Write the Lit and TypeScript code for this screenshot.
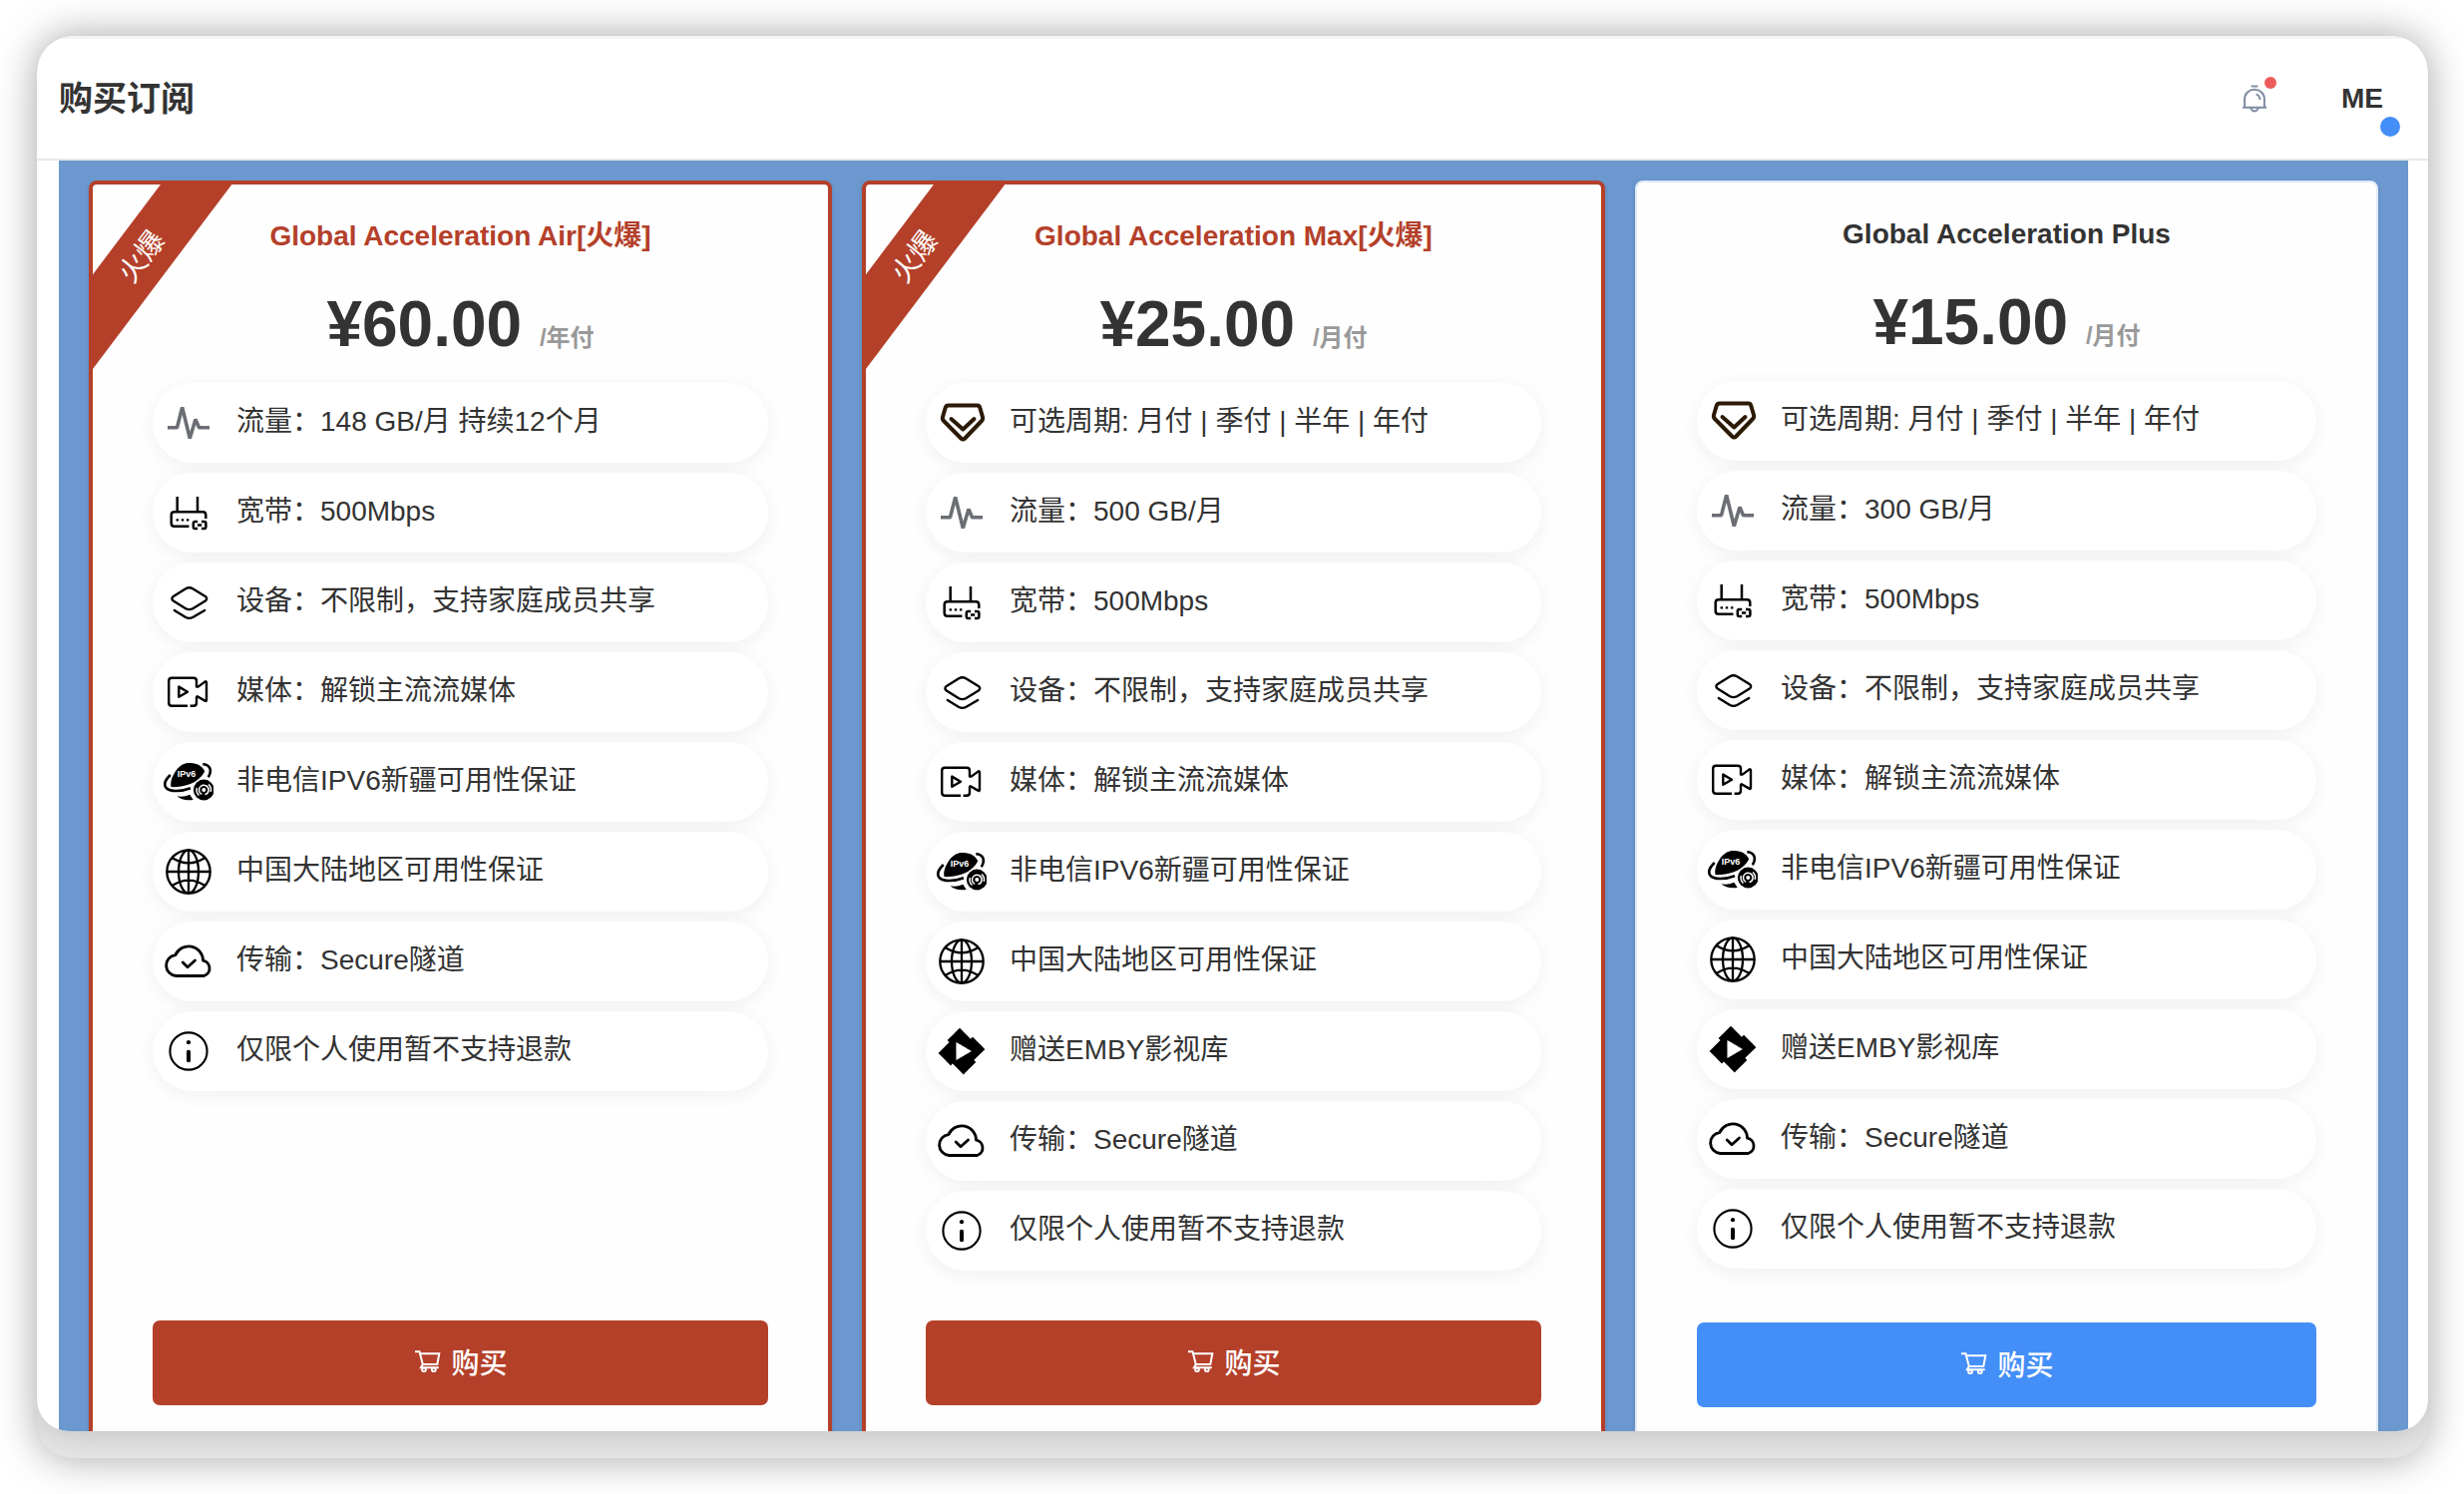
import { LitElement, html, css, svg, type TemplateResult } from "lit";
import { customElement, property } from "lit/decorators.js";
import { classMap } from "lit/directives/class-map.js";

type IconName =
  | "shield" | "pulse" | "router" | "layers" | "video"
  | "ipv6" | "globe" | "emby" | "cloud" | "info";

interface Feature {
  icon: IconName;
  text: string;
}

interface Plan {
  name: string;
  price: string;
  period: string;
  ribbon?: string;
  features: Feature[];
}

const icons: Record<IconName, TemplateResult> = {
  shield: svg`<g fill="none" stroke="#2b1a06" stroke-width="4" stroke-linejoin="round" stroke-linecap="round">
    <path d="M12 7.500H40.600Q42.600 7.500 43.200 9.500L46 19Q46.600 21.400 45 23L28.300 40.500Q26.300 42.500 24.300 40.500L7 23Q5.400 21.400 6 19L8.800 9.500Q9.400 7.500 12 7.500Z"/>
    <path d="M14.500 21L26.300 31.500L37.500 21"/></g>`,
  pulse: svg`<path fill="none" stroke="#6b6e74" stroke-width="3.600" stroke-linejoin="bevel" d="M4 29.700H13.500L18.700 9.500L26.300 40.500L32 21.500L35.500 29.700H46"/>`,
  router: svg`<g fill="none" stroke="#000" stroke-width="2.500">
    <path d="M13.700 9V24M34 9V24"/>
    <path d="M42.300 31V27.300Q42.300 24.300 39.300 24.300H10.700Q7.700 24.300 7.700 27.300V35.700Q7.700 38.700 10.700 38.700H25.500"/>
    <path d="M34.200 34H31.600Q29.800 34 29.800 35.800V39.200Q29.800 41 31.600 41H34.200M38 34H40.600Q42.400 34 42.400 35.800V39.200Q42.400 41 40.600 41H38M34 37.500H38.200"/></g>
    <path d="M12.600 31.200h2.400v2.400h-2.400zM17.800 31.200h2.400v2.400h-2.400zM23 31.200h2.400v2.400h-2.400z"/>`,
  layers: svg`<g fill="none" stroke="#000" stroke-width="2.400" stroke-linejoin="round" stroke-linecap="round">
    <path d="M22.200 11.200Q25.700 9.400 29.200 11.200L41.800 18.900Q44.600 21.200 41.800 23.500L29.200 31.200Q25.700 33 22.200 31.200L9.800 23.500Q7 21.200 9.800 18.900Z"/>
    <path d="M10.800 33L22.200 40Q25.700 41.800 29.200 40L41.200 33"/></g>`,
  video: svg`<g fill="none" stroke="#000" stroke-width="2.400" stroke-linejoin="round">
    <path d="M24 38.700H8.200Q5.200 38.700 5.200 35.700V13.800Q5.200 10.800 8.200 10.800H30Q33 10.800 33 13.800V19.600H34.600L41.400 14.600Q43 13.700 43 15.600V32.800Q43 34.600 41.400 33.600L33.800 29.200L33 30V35.700Q33 38.700 30 38.700H26.600"/>
    <path d="M15.300 19.600V29.800L24 24.700Z"/></g>`,
  ipv6: svg`<path d="M7.500 30C6.400 24.500 9 18.500 12.500 13.500C17 7.500 21.500 5.800 27 6C33.500 6.200 39 9 41.200 14.300C38.600 20.300 31.500 26.500 22 28.600C16.500 29.900 11 30.400 7.500 30Z"/>
    <path fill="none" stroke="#000" stroke-width="2.600" d="M6.800 18C2 22.500 -.2 27.500 2.600 31C6.500 35 17 35 27 31.200M39.300 7.200C45.500 7.300 49.500 12.500 44.800 20.200"/>
    <path d="M13.500 39.300Q20 40.500 26.300 37.800L29.700 43Q19.500 44.600 13.500 39.300Z"/>
    <circle cx="40.300" cy="33" r="10.400"/>
    <path fill="none" stroke="#fff" stroke-width="1.500" d="M38.200 37.400A4.800 4.800 0 1 1 45 32.200M42.400 28.600A4.800 4.800 0 0 1 41.500 37.600M33.400 31A7.300 7.300 0 0 0 35.500 38.500M47.200 35A7.300 7.300 0 0 0 45 27.500"/>
    <circle cx="40.300" cy="33" r="2" fill="#fff"/>
    <text class="tiny" x="13.800" y="20" fill="#fff">IPv6</text>`,
  globe: svg`<g fill="none" stroke="#000" stroke-width="2.300">
    <circle cx="25" cy="25" r="21.700"/><ellipse cx="25" cy="25" rx="10" ry="21.700"/>
    <path d="M25 3.300V46.700M3.300 25H46.700M8.500 11Q25 21.800 41.500 11M8.500 39Q25 28.200 41.500 39"/></g>`,
  emby: svg`<path transform="translate(1.600 1.700) scale(1.945)" d="M11.041 0c-.007 0-1.456 1.430-3.219 3.176L4.615 6.352l.512.513.512.512-2.819 2.791L0 12.961l1.830 1.848c1.006 1.016 2.438 2.460 3.182 3.209l1.351 1.359.508-.496c.280-.273.515-.498.524-.498.008 0 1.266 1.264 2.794 2.808L12.970 24l.187-.182c.230-.225 5.007-4.950 5.717-5.656l.520-.516-.502-.513c-.276-.282-.500-.520-.496-.530.003-.009 1.264-1.260 2.802-2.783 1.538-1.522 2.800-2.776 2.803-2.785.005-.012-3.617-3.684-6.107-6.193L17.650 4.600l-.505.505c-.279.278-.517.501-.530.497-.013-.005-1.270-1.267-2.793-2.805A449.655 449.655 0 0 0 11.041 0zM9.223 7.367c.091.038 7.951 4.608 7.957 4.627.003.013-1.781 1.056-3.965 2.320a999.898 999.898 0 0 1-3.996 2.307c-.019.006-.026-1.266-.026-4.629 0-3.700.007-4.634.030-4.625Z"/>`,
  cloud: svg`<g fill="none" stroke="#000" stroke-width="2.800" stroke-linejoin="round" stroke-linecap="round">
    <path d="M12.500 39.500A10.500 10.500 0 0 1 11.800 18.600A14.500 14.500 0 0 1 39.600 24.200A7.900 7.900 0 0 1 40.500 39.500Z"/>
    <path d="M19.200 26L24 30.800L31.500 24"/></g>`,
  info: svg`<circle cx="25" cy="25" r="18.600" fill="none" stroke="#000" stroke-width="2.100"/>
    <circle cx="25" cy="16.200" r="2.100"/><rect x="23" y="23.700" width="4" height="12.600" rx="1.800"/>`,
};

const period: Feature = { icon: "shield", text: "可选周期: 月付 | 季付 | 半年 | 年付" };
const traffic = (text: string): Feature => ({ icon: "pulse", text: `流量：${text}` });
const common: Feature[] = [
  { icon: "router", text: "宽带：500Mbps" },
  { icon: "layers", text: "设备：不限制，支持家庭成员共享" },
  { icon: "video", text: "媒体：解锁主流流媒体" },
  { icon: "ipv6", text: "非电信IPV6新疆可用性保证" },
  { icon: "globe", text: "中国大陆地区可用性保证" },
];
const emby: Feature = { icon: "emby", text: "赠送EMBY影视库" };
const closing: Feature[] = [
  { icon: "cloud", text: "传输：Secure隧道" },
  { icon: "info", text: "仅限个人使用暂不支持退款" },
];

const plans: Plan[] = [
  {
    name: "Global Acceleration Air[火爆]",
    price: "¥60.00",
    period: "/年付",
    ribbon: "火爆",
    features: [traffic("148 GB/月 持续12个月"), ...common, ...closing],
  },
  {
    name: "Global Acceleration Max[火爆]",
    price: "¥25.00",
    period: "/月付",
    ribbon: "火爆",
    features: [period, traffic("500 GB/月"), ...common, emby, ...closing],
  },
  {
    name: "Global Acceleration Plus",
    price: "¥15.00",
    period: "/月付",
    features: [period, traffic("300 GB/月"), ...common, emby, ...closing],
  },
];

@customElement("plan-card")
export class PlanCard extends LitElement {
  @property({ attribute: false }) plan!: Plan;

  static styles = css`
    :host {
      display: flex;
      min-width: 0;
    }
    .card {
      position: relative;
      flex: 1;
      min-width: 0;
      box-sizing: border-box;
      display: flex;
      flex-direction: column;
      padding: 28px 60px 60px;
      overflow: hidden;
      background: #fefefe;
      border: 2px solid #dfeaf7;
      border-radius: 8px;
      box-shadow: 0 2px 4px rgba(40, 60, 100, 0.2);
    }
    .card.hot {
      border: 4px solid #b4402a;
    }
    .ribbon {
      position: absolute;
      left: -91px;
      top: 44px;
      width: 280px;
      line-height: 57px;
      background: #b4402a;
      color: #fff;
      font-size: 28px;
      text-align: center;
      transform: rotate(-53deg);
    }
    .name {
      margin: 0;
      font-size: 28px;
      line-height: 48px;
      font-weight: 700;
      text-align: center;
      color: #333;
    }
    .hot .name {
      color: #b4402a;
    }
    .price {
      margin: 25px 0 19px;
      font-size: 64px;
      line-height: 79px;
      font-weight: 700;
      text-align: center;
      color: #333;
      white-space: nowrap;
    }
    .period {
      font-size: 24px;
      line-height: 24px;
      font-weight: 700;
      color: #999;
    }
    .features {
      list-style: none;
      margin: 0 0 50px;
      padding: 0;
      display: flex;
      flex-direction: column;
      gap: 10px;
    }
    .feature {
      display: flex;
      align-items: center;
      gap: 23px;
      height: 80px;
      padding: 0 11px;
      box-sizing: border-box;
      border-radius: 40px;
      background: rgba(255, 255, 255, 0.8);
      box-shadow: 0 4px 20px rgba(0, 0, 0, 0.06);
      font-size: 28px;
      line-height: 40px;
      color: #333;
    }
    .icon {
      flex: none;
      width: 50px;
      height: 50px;
    }
    .label {
      padding-bottom: 2px;
    }
    .tiny {
      font: 700 9px "Liberation Sans", sans-serif;
    }
    .buy {
      display: flex;
      align-items: center;
      justify-content: center;
      gap: 10px;
      height: 85px;
      margin-top: auto;
      padding: 0 0 4px 2px;
      border: 0;
      border-radius: 7px;
      background: #448ef7;
      color: #fff;
      font: inherit;
      font-size: 28px;
      font-weight: 500;
      cursor: pointer;
    }
    .hot .buy {
      background: #b4402a;
    }
    .cart {
      width: 26px;
      height: 22px;
    }
  `;

  render() {
    const { name, price, period, ribbon, features } = this.plan;
    return html`
      <article class=${classMap({ card: true, hot: !!ribbon })}>
        ${ribbon ? html`<span class="ribbon">${ribbon}</span>` : null}
        <h2 class="name">${name}</h2>
        <p class="price">${price} <span class="period">${period}</span></p>
        <ul class="features">
          ${features.map(
            (f) => html`<li class="feature">
              <svg class="icon" viewBox="0 0 50 50" aria-hidden="true">${icons[f.icon]}</svg>
              <span class="label">${f.text}</span>
            </li>`,
          )}
        </ul>
        <button class="buy" type="button">
          <svg class="cart" viewBox="0 0 26 22" fill="none" stroke="#fff" stroke-width="2" aria-hidden="true">
            <path d="M0 1.200H4.500L7.800 13.900H22.300L24.300 3.200H5M7.800 13.900L5.900 17.200H23.800" />
            <circle cx="9" cy="19.300" r="1.900" />
            <circle cx="18.800" cy="19.300" r="1.900" />
          </svg>
          购买
        </button>
      </article>
    `;
  }
}

@customElement("app-root")
export class AppRoot extends LitElement {
  static styles = css`
    :host {
      display: flex;
      height: 100vh;
      box-sizing: border-box;
      padding: 36px 36px 36px 37px;
      overflow: hidden;
      background: #fff;
      font-family: "Liberation Sans", "Noto Sans CJK SC", sans-serif;
      color: #333;
    }
    .frame {
      flex: 1;
      min-width: 0;
      display: flex;
      padding-bottom: 27px;
      box-sizing: border-box;
      overflow: hidden;
      border-radius: 36px;
      background: #e6e6e6;
      box-shadow: 0 0 40px rgba(0, 0, 0, 0.36);
    }
    .window {
      flex: 1;
      min-width: 0;
      display: flex;
      flex-direction: column;
      overflow: hidden;
      border-radius: 36px 36px 32px 32px;
      background: #fff;
      box-shadow: 0 0 36px rgba(0, 0, 0, 0.2);
    }
    .bar {
      flex: none;
      display: flex;
      align-items: center;
      height: 125px;
      box-sizing: border-box;
      padding: 0 45px 0 22px;
      border-top: 3px solid #f4f4f4;
      border-bottom: 2px solid #e8e8e8;
    }
    .title {
      margin: 0;
      flex: 1;
      font-size: 34px;
      line-height: 48px;
      font-weight: 700;
    }
    .bell,
    .user {
      position: relative;
      border: 0;
      padding: 0;
      background: none;
      color: inherit;
      font: inherit;
      cursor: pointer;
    }
    .bell {
      display: flex;
      margin-right: 75px;
    }
    .bell-icon {
      width: 24px;
      height: 28px;
    }
    .badge {
      position: absolute;
      left: 22px;
      top: -8px;
      width: 12px;
      height: 12px;
      border-radius: 50%;
      background: #ec5b5a;
    }
    .user {
      font-size: 28px;
      line-height: 32px;
      font-weight: 700;
    }
    .status {
      position: absolute;
      right: -17px;
      bottom: -22px;
      width: 20px;
      height: 20px;
      border-radius: 50%;
      background: #448ef7;
    }
    .content {
      flex: 1;
      min-height: 0;
      overflow: hidden;
      margin: 0 20px 0 22px;
      padding: 20px 30px;
      background: #6b98ce;
    }
    .plans {
      display: grid;
      grid-template-columns: repeat(3, minmax(0, 1fr));
      gap: 30px;
    }
  `;

  render() {
    return html`
      <div class="frame">
        <div class="window">
          <header class="bar">
            <h1 class="title">购买订阅</h1>
            <button class="bell" type="button" aria-label="通知">
              <svg class="bell-icon" viewBox="0 0 24 28" fill="none" stroke="#7f8ca1" stroke-width="2" aria-hidden="true">
                <path d="M8.700 1.400H15.300M2.100 22.500V14A9.900 9.300 0 0 1 21.900 14V22.500M0 22.800H24M8 23.500Q12 29.500 16 23.500M13.600 9.600Q17.300 10.600 17.500 15" />
              </svg>
              <span class="badge"></span>
            </button>
            <button class="user" type="button">ME<span class="status"></span></button>
          </header>
          <main class="content">
            <div class="plans">
              ${plans.map((p) => html`<plan-card .plan=${p}></plan-card>`)}
            </div>
          </main>
        </div>
      </div>
    `;
  }
}
